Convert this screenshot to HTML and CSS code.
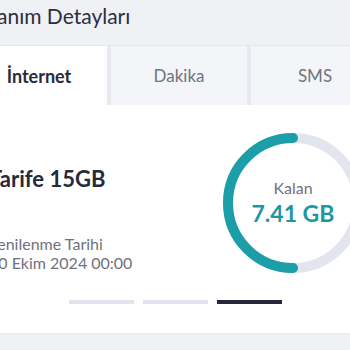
FILE: index.html
```html
<!DOCTYPE html>
<html lang="tr">

<head>
    <meta charset="UTF-8">
    <title>Kullanım Detayları</title>
    <link rel="stylesheet" href="styles.css">
</head>

<body>

    <div class="page">
        <h2 class="title">Kullanım Detayları</h2>

        <div class="tabs">
            <div class="tab active">İnternet</div>
            <div class="tab">Dakika</div>
            <div class="tab">SMS</div>
        </div>

        <div class="card">
            <div class="card-row">
                <div class="info">
                    <div class="plan">Tarife 15GB</div>
                    <div class="renew-label">Yenilenme Tarihi</div>
                    <div class="renew-date">30 Ekim 2024 00:00</div>
                </div>

                <div class="ring">
                    <svg width="140" height="140" viewBox="0 0 140 140">
                        <circle cx="70" cy="70" r="65" fill="none" stroke="#e2e5ee" stroke-width="10"/>
                        <path d="M70 5 A65 65 0 0 0 70 135" fill="none" stroke="#1b9ea8" stroke-width="10" stroke-linecap="round"/>
                    </svg>
                    <div class="ring-text">
                        <div class="ring-label">Kalan</div>
                        <div class="ring-value">7.41 GB</div>
                    </div>
                </div>
            </div>

            <div class="dots">
                <span class="dot"></span>
                <span class="dot"></span>
                <span class="dot current"></span>
            </div>
        </div>

        <div class="footer"></div>
    </div>

</body>

</html>
```

FILE: styles.css
```css
html, body {
    overflow: hidden;
}

body {
    margin: 0;
    background-color: #f0f1f5;
    font-family: Lato, "Noto Sans", sans-serif;
    color: #262a3b;
}

.page {
    width: 416px;
    margin-left: -29px;
}

.title {
    margin: 0;
    height: 45px;
    padding-top: 3px;
    box-sizing: border-box;
    font-size: 21px;
    font-weight: 400;
    line-height: 26px;
    text-indent: -9px;
    color: #2b2e3f;
}

.tabs {
    display: grid;
    grid-template-columns: 136px 136px 136px;
    gap: 4px;
    background: #e6e9f0;
    border-top: 1px solid #e4e6ec;
    height: 59px;
}

.tab {
    display: flex;
    align-items: center;
    justify-content: center;
    background: #f4f5f8;
    font-size: 17px;
    color: #70737e;
}

.tab.active {
    background: #fff;
    font-size: 18px;
    font-weight: 700;
    color: #262a3b;
}

.tab:last-child {
    padding-right: 8px;
}

.card {
    background: #fff;
    padding: 28px 0 29px 18px;
    border-bottom: 1px solid #e9ebf0;
}

.card-row {
    display: flex;
    justify-content: space-between;
}

.info {
    padding-top: 33px;
}

.plan {
    font-size: 22px;
    font-weight: 700;
    line-height: 25px;
    margin-bottom: 43px;
}

.renew-label,
.renew-date {
    font-size: 16px;
    line-height: 19px;
    color: #6f727d;
}

.ring {
    position: relative;
    width: 140px;
    height: 140px;
    margin-right: 24px;
}

.ring svg {
    display: block;
}

.ring-text {
    position: absolute;
    inset: 0;
    display: flex;
    flex-direction: column;
    align-items: center;
    justify-content: center;
}

.ring-label {
    font-size: 16px;
    color: #6f727d;
    line-height: 20px;
}

.ring-value {
    font-size: 23px;
    font-weight: 700;
    color: #1b98a4;
    line-height: 30px;
}

.dots {
    display: flex;
    justify-content: center;
    gap: 9px;
    margin-top: 27px;
    padding-right: 26px;
}

.dot {
    width: 65px;
    height: 4px;
    background: #e1e4ec;
}

.dot.current {
    background: #242839;
}

.footer {
    height: 40px;
}
```
